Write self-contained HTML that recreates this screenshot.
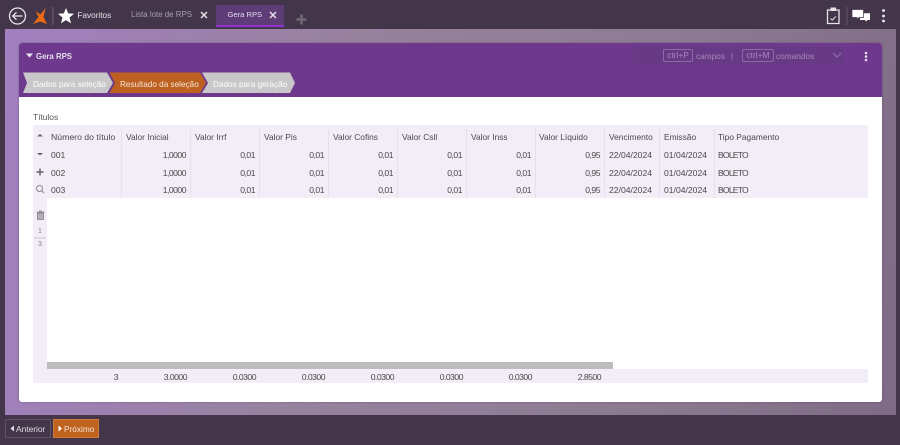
<!DOCTYPE html>
<html><head><meta charset="utf-8">
<style>
*{box-sizing:border-box}
html,body{margin:0;padding:0;width:900px;height:445px;overflow:hidden;background:#44364a}
body{font-family:"Liberation Sans",sans-serif;font-size:8.6px;color:#4a4a4a;position:relative}
#wrap{position:absolute;left:0;top:0;width:900px;height:445px;filter:blur(.35px)}
.a{position:absolute;white-space:nowrap}
.r{position:absolute;white-space:nowrap;text-align:right;width:60px;letter-spacing:-.5px}
.h{position:absolute;white-space:nowrap;top:131.5px;font-size:8.4px}
.b{letter-spacing:-.8px}
.sep{position:absolute;width:1px;background:#e6e0ea;top:129px;height:69px}
.s{position:absolute;white-space:nowrap;top:79.5px;font-size:8.2px}
.t1{top:150px}.t2{top:167.5px}.t3{top:185px}.t4{top:371.5px}
</style></head><body><div id="wrap">

<!-- top bar -->
<svg class="a" style="left:0;top:0" width="120" height="29" viewBox="0 0 120 29">
<circle cx="17.5" cy="16" r="8" fill="none" stroke="#e8e4ea" stroke-width="1.3"/>
<path d="M22.5 16H13M16.5 12.3L12.700 16l3.800 3.700" fill="none" stroke="#e8e4ea" stroke-width="1.3"/>
<path d="M33 24L38.500 17 35.500 11 40.500 14.500 45.500 8 43.500 17 47 24 40 21.500z" fill="#ec6a14"/>
<rect x="52.500" y="7" width="1" height="18" fill="#6e6274"/>
<path d="M66 8l2.200 5.400 5.800.4-4.500 3.700 1.500 5.700-5-3.100-5 3.100 1.500-5.700-4.500-3.700 5.800-.4z" fill="#fff"/>
</svg>
<div class="a" style="left:77.5px;top:11px;color:#e6e2e8;font-size:8.2px">Favoritos</div>
<div class="a" style="left:131px;top:10px;color:#a99fae;font-size:7.9px">Lista lote de RPS</div>
<svg class="a" style="left:199px;top:10px" width="10" height="10"><path d="M2 2l6 6M8 2L2 8" stroke="#e4e0e6" stroke-width="1.500"/></svg>
<div class="a" style="left:216px;top:5px;width:68px;height:22px;background:#5d3c77;border-bottom:2px solid #9431cf"></div>
<div class="a" style="left:227.5px;top:9.5px;color:#e4dcea;font-size:7.600px">Gera RPS</div>
<svg class="a" style="left:268px;top:10px" width="10" height="10"><path d="M2 2l6 6M8 2L2 8" stroke="#e4e0e6" stroke-width="1.500"/></svg>
<svg class="a" style="left:296px;top:14px" width="11" height="11"><path d="M5.500 .5v10M.5 5.500h10" stroke="#716776" stroke-width="2.600"/></svg>

<svg class="a" style="left:820px;top:4px" width="80" height="24" viewBox="820 4 80 24">
<path d="M827.500 10h11.500v13.500h-11.500z" fill="none" stroke="#e6e2e8" stroke-width="1.300"/>
<rect x="830.500" y="7.500" width="5.500" height="3.500" fill="#e6e2e8"/>
<path d="M830.500 18.500l1.800 1.600 3.500-3.600" fill="none" stroke="#e6e2e8" stroke-width="1"/>
<rect x="846.500" y="7" width="1" height="18" fill="#62566a"/>
<path d="M860 13.300h10v6.700h-2.500l-1.500 1.500-1-1.500h-5z" fill="#fff"/>
<path d="M852 9.500h11.500v8h-4.500l-2 2v-2h-5z" fill="#fff" stroke="#44364a" stroke-width=".7"/>
<circle cx="883.500" cy="10.500" r="1.400" fill="#f0edf2"/><circle cx="883.500" cy="16" r="1.400" fill="#f0edf2"/><circle cx="883.500" cy="21" r="1.400" fill="#f0edf2"/>
</svg>

<!-- content background -->
<div class="a" style="left:5px;top:29px;width:891px;height:386px;background:linear-gradient(100deg,#a27fc0 0%,#98829f 35%,#8d7b93 70%,#7f6b85 100%)"></div>

<!-- panel -->
<div class="a" style="left:19px;top:43px;width:863px;height:359px;background:#fff;border-radius:3px;box-shadow:0 0 2px rgba(60,40,70,.4)"></div>
<div class="a" style="left:19px;top:43px;width:863px;height:54px;background:#6e398c;border-radius:3px 3px 0 0"></div>
<svg class="a" style="left:26px;top:53px" width="8" height="6"><path d="M0 .5h7L3.500 4.500z" fill="#efe8f3"/></svg>
<div class="a" style="left:36px;top:51.5px;color:#e6dcec;font-weight:bold;font-size:7.8px">Gera RPS</div>

<!-- right tools in header -->
<div class="a" style="left:633px;top:47px;width:211px;height:17px;background:#683a85;border-radius:2px"></div>
<div class="a" style="left:663px;top:49px;width:30px;height:13px;border:1px solid #8c68a5;border-radius:2px;color:#a589ba;text-align:center;line-height:11px;font-size:8.400px">ctrl+P</div>
<div class="a" style="left:696px;top:51px;color:#a589ba;font-size:8.300px">campos</div>
<div class="a" style="left:731px;top:51px;color:#a589ba">|</div>
<div class="a" style="left:742px;top:49px;width:32px;height:13px;border:1px solid #8c68a5;border-radius:2px;color:#a589ba;text-align:center;line-height:11px;font-size:8.400px">ctrl+M</div>
<div class="a" style="left:776px;top:51px;color:#a589ba;font-size:8.300px">comandos</div>
<svg class="a" style="left:832px;top:52px" width="10" height="7"><path d="M1 1l4 4 4-4" fill="none" stroke="#8e6ca6" stroke-width="1.200"/></svg>
<svg class="a" style="left:863px;top:51px" width="6" height="12"><circle cx="3" cy="2" r="1.300" fill="#e6dcec"/><circle cx="3" cy="5.500" r="1.300" fill="#e6dcec"/><circle cx="3" cy="9" r="1.300" fill="#e6dcec"/></svg>

<!-- steps -->
<svg class="a" style="left:19px;top:70px" width="290" height="27" viewBox="19 70 290 27">
<path d="M23 72.500H107L113 83 107 93H23L27 83z" fill="#c9c7c9"/>
<path d="M109.500 72.500H200L206 83 200 93H109.500L115 83z" fill="#bd6020"/>
<path d="M202 72.500H290L295 83 290 93H202L208 83z" fill="#c9c7c9"/>
</svg>
<div class="s" style="left:33px;color:#fff">Dados para seleção</div>
<div class="s" style="left:120px;color:#f4e6da">Resultado da seleção</div>
<div class="s" style="left:213px;color:#fff">Dados para geração</div>

<!-- table -->
<div class="a" style="left:33px;top:112px;color:#555;font-size:8.400px">Títulos</div>
<div class="a" style="left:33px;top:125px;width:835px;height:73px;background:#f2edf7"></div>
<div class="a" style="left:33px;top:198px;width:14px;height:171px;background:#f2edf7"></div>
<div class="a" style="left:33px;top:369px;width:835px;height:14px;background:#f2edf7"></div>
<div class="a" style="left:47px;top:362px;width:566px;height:7px;background:#bdbdbd"></div>

<div class="sep" style="left:121px"></div>
<div class="sep" style="left:190px"></div>
<div class="sep" style="left:259px"></div>
<div class="sep" style="left:328px"></div>
<div class="sep" style="left:397px"></div>
<div class="sep" style="left:466px"></div>
<div class="sep" style="left:535px"></div>
<div class="sep" style="left:604px"></div>
<div class="sep" style="left:659px"></div>
<div class="sep" style="left:714px"></div>

<!-- side icons -->
<svg class="a" style="left:33px;top:125px" width="14" height="130" viewBox="33 125 14 130">
<path d="M37 136.500l3-2.500 3 2.500z" fill="#66606a"/>
<path d="M37 153h6l-3 2.500z" fill="#66606a"/>
<path d="M40 168.500v7M36.500 172h7" stroke="#66606a" stroke-width="1.500"/>
<circle cx="39.500" cy="188.500" r="3" fill="none" stroke="#8a8590" stroke-width="1"/><path d="M41.800 190.800l2.200 2.200" stroke="#8a8590" stroke-width="1"/>
<path d="M37.500 213h6v6.500h-6z" fill="#b3aeb6" stroke="#85808a" stroke-width=".8"/><path d="M36.500 212.200h8M39 211h3" stroke="#85808a" stroke-width=".9"/>
<rect x="34" y="237.500" width="12" height="1" fill="#cfc9d3"/>
</svg>
<div class="a" style="left:33px;top:227.5px;width:14px;text-align:center;font-size:7px;color:#8a8590">1</div>
<div class="a" style="left:33px;top:241px;width:14px;text-align:center;font-size:7px;color:#8a8590">3</div>

<!-- headers -->
<div class="h" style="left:51px;font-size:8.7px">Número do título</div>
<div class="h" style="left:126px">Valor Inicial</div>
<div class="h" style="left:195px">Valor Irrf</div>
<div class="h" style="left:264px">Valor Pis</div>
<div class="h" style="left:333px">Valor Cofins</div>
<div class="h" style="left:402px">Valor Csll</div>
<div class="h" style="left:471px">Valor Inss</div>
<div class="h" style="left:539px">Valor Líquido</div>
<div class="h" style="left:609px">Vencimento</div>
<div class="h" style="left:664px">Emissão</div>
<div class="h" style="left:718px">Tipo Pagamento</div>

<!-- row 1 -->
<div class="a t1" style="left:51px">001</div>
<div class="r t1" style="left:126px">1,0000</div>
<div class="r t1" style="left:195px">0,01</div>
<div class="r t1" style="left:264px">0,01</div>
<div class="r t1" style="left:333px">0,01</div>
<div class="r t1" style="left:402px">0,01</div>
<div class="r t1" style="left:471px">0,01</div>
<div class="r t1" style="left:540px">0,95</div>
<div class="a t1" style="left:609px">22/04/2024</div>
<div class="a t1" style="left:664px">01/04/2024</div>
<div class="a t1 b" style="left:718px">BOLETO</div>
<!-- row 2 -->
<div class="a t2" style="left:51px">002</div>
<div class="r t2" style="left:126px">1,0000</div>
<div class="r t2" style="left:195px">0,01</div>
<div class="r t2" style="left:264px">0,01</div>
<div class="r t2" style="left:333px">0,01</div>
<div class="r t2" style="left:402px">0,01</div>
<div class="r t2" style="left:471px">0,01</div>
<div class="r t2" style="left:540px">0,95</div>
<div class="a t2" style="left:609px">22/04/2024</div>
<div class="a t2" style="left:664px">01/04/2024</div>
<div class="a t2 b" style="left:718px">BOLETO</div>
<!-- row 3 -->
<div class="a t3" style="left:51px">003</div>
<div class="r t3" style="left:126px">1,0000</div>
<div class="r t3" style="left:195px">0,01</div>
<div class="r t3" style="left:264px">0,01</div>
<div class="r t3" style="left:333px">0,01</div>
<div class="r t3" style="left:402px">0,01</div>
<div class="r t3" style="left:471px">0,01</div>
<div class="r t3" style="left:540px">0,95</div>
<div class="a t3" style="left:609px">22/04/2024</div>
<div class="a t3" style="left:664px">01/04/2024</div>
<div class="a t3 b" style="left:718px">BOLETO</div>

<!-- footer totals -->
<div class="r t4" style="left:58px">3</div>
<div class="r t4" style="left:127px">3.0000</div>
<div class="r t4" style="left:196px">0.0300</div>
<div class="r t4" style="left:265px">0.0300</div>
<div class="r t4" style="left:334px">0.0300</div>
<div class="r t4" style="left:403px">0.0300</div>
<div class="r t4" style="left:472px">0.0300</div>
<div class="r t4" style="left:541px">2.8500</div>

<!-- bottom buttons -->
<div class="a" style="left:5px;top:419px;width:46px;height:19px;border:1px solid #5f5068;background:#44364a"></div>
<svg class="a" style="left:10px;top:425px" width="5" height="7"><path d="M4 .5v6L.5 3.500z" fill="#e6e2e8"/></svg>
<div class="a" style="left:16px;top:424px;color:#e0dbe3;font-size:8.400px">Anterior</div>
<div class="a" style="left:53px;top:419px;width:46px;height:19px;background:#c0631f;border:1px solid #cf7a38"></div>
<svg class="a" style="left:58px;top:425px" width="5" height="7"><path d="M.5 .5v6L4 3.500z" fill="#fff"/></svg>
<div class="a" style="left:64px;top:424px;color:#f6e6da;font-size:8.300px">Próximo</div>

</div></body></html>
